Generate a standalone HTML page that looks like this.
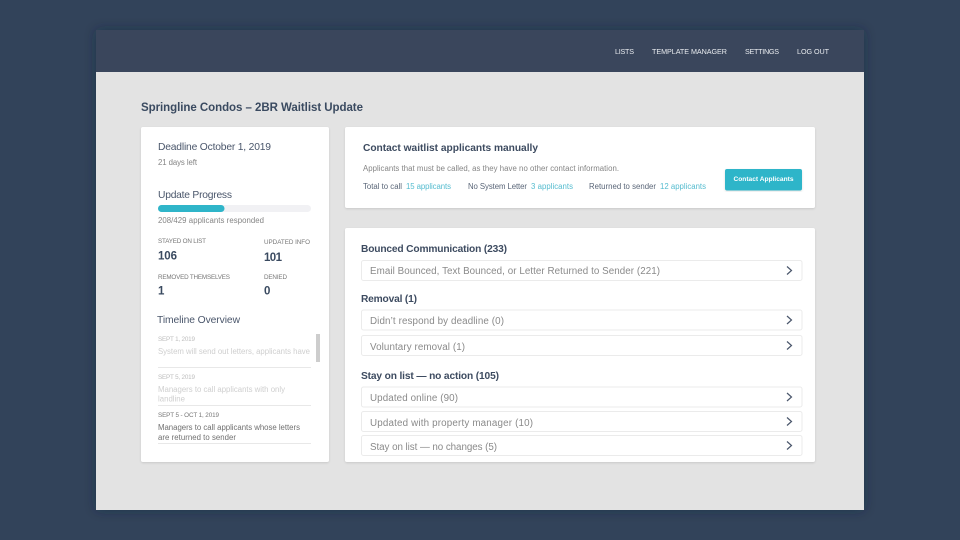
<!DOCTYPE html>
<html>
<head>
<meta charset="utf-8">
<style>
html,body{margin:0;padding:0;width:960px;height:540px;overflow:hidden;background:#32435a}
svg{display:block;filter:blur(.3px)}
text{font-family:"Liberation Sans",sans-serif;white-space:pre}
.nav{font-size:7.2px;fill:#e8ebef}
.h{font-size:10.3px;fill:#4a566b}
.s{font-size:7.8px;fill:#858585}
.l{font-size:6.3px;fill:#777}
.n{font-size:11.5px;font-weight:bold;fill:#3a4a60}
.d{font-size:6.3px;fill:#bdbdbd}
.t{font-size:7.8px;fill:#cfcfcf}
.b{font-size:10.2px;font-weight:bold;fill:#3d4b60}
.m{font-size:7.8px;fill:#5a6678}
.c{font-size:7.8px;fill:#55bccf}
.r{font-size:9.8px;fill:#8a8a8a}
.row{fill:#fff;stroke:#ebebeb;stroke-width:1}
.chev{fill:none;stroke:#4a566b;stroke-width:1.2}
.line{stroke:#e8e8e8;stroke-width:1}
</style>
</head>
<body>
<svg width="960" height="540" viewBox="0 0 960 540" xmlns="http://www.w3.org/2000/svg">
<defs>
<filter id="w" x="-10%" y="-10%" width="120%" height="120%"><feDropShadow dx="0" dy="0" stdDeviation="6" flood-color="#1c2838" flood-opacity=".45"/></filter>
<filter id="k" x="-5%" y="-5%" width="110%" height="110%"><feDropShadow dx="0" dy="1" stdDeviation="1" flood-color="#000" flood-opacity=".12"/></filter>
</defs>
<rect width="960" height="540" fill="#32435a"/>
<rect x="96" y="30" width="768" height="480" fill="#e3e3e3" filter="url(#w)"/>
<rect x="96" y="30" width="768" height="42" fill="#3a465c"/>
<text class="nav" x="615" y="54" textLength="19">LISTS</text>
<text class="nav" x="652" y="54" textLength="75">TEMPLATE MANAGER</text>
<text class="nav" x="745" y="54" textLength="34">SETTINGS</text>
<text class="nav" x="797" y="54" textLength="32">LOG OUT</text>

<text x="141" y="111" font-size="11.500" font-weight="bold" fill="#3a4a60" textLength="222">Springline Condos – 2BR Waitlist Update</text>

<rect x="141" y="127" width="188" height="335" rx="2" fill="#fff" filter="url(#k)"/>
<text class="h" x="158" y="150" textLength="113">Deadline October 1, 2019</text>
<text class="s" x="158" y="165" textLength="39">21 days left</text>
<text class="h" x="158" y="198" textLength="74">Update Progress</text>
<rect x="158" y="205" width="153" height="7" rx="3.5" fill="#f1f1f4"/>
<rect x="158" y="205" width="66.5" height="7" rx="3.5" fill="#2fb5c9"/>
<text class="s" x="158" y="223" textLength="106">208/429 applicants responded</text>
<text class="l" x="158" y="243" textLength="48">STAYED ON LIST</text>
<text class="n" x="158" y="259.500" textLength="19">106</text>
<text class="l" x="264" y="244" textLength="46">UPDATED INFO</text>
<text class="n" x="264" y="261" textLength="18">101</text>
<text class="l" x="158" y="279" textLength="72">REMOVED THEMSELVES</text>
<text class="l" x="264" y="279" textLength="23">DENIED</text>
<text class="n" x="158" y="294.500">1</text>
<text class="n" x="264" y="294.500">0</text>
<text class="h" x="157" y="323" textLength="83">Timeline Overview</text>
<text class="d" x="158" y="341" textLength="37">SEPT 1, 2019</text>
<text class="t" x="158" y="354" textLength="152">System will send out letters, applicants have</text>
<line class="line" x1="158" y1="367.500" x2="311" y2="367.500"/>
<rect x="316" y="334" width="4" height="28" fill="#cdcdcd"/>
<text class="d" x="158" y="379" textLength="37">SEPT 5, 2019</text>
<text class="t" x="158" y="392" textLength="127">Managers to call applicants with only</text>
<text class="t" x="158" y="401.500" textLength="27">landline</text>
<line class="line" x1="158" y1="405.500" x2="311" y2="405.500"/>
<text x="158" y="417" font-size="6.300" fill="#777" textLength="61">SEPT 5 - OCT 1, 2019</text>
<text x="158" y="430" font-size="7.800" fill="#707070" textLength="142">Managers to call applicants whose letters</text>
<text x="158" y="440" font-size="7.800" fill="#707070" textLength="78">are returned to sender</text>
<line class="line" x1="158" y1="443.500" x2="311" y2="443.500"/>

<rect x="345" y="127" width="470" height="81" rx="2" fill="#fff" filter="url(#k)"/>
<text class="b" x="363" y="151" textLength="175">Contact waitlist applicants manually</text>
<text class="s" x="363" y="171" textLength="256">Applicants that must be called, as they have no other contact information.</text>
<text class="m" x="363" y="189" textLength="39">Total to call</text>
<text class="c" x="406" y="189" textLength="45">15 applicants</text>
<text class="m" x="468" y="189" textLength="59">No System Letter</text>
<text class="c" x="531" y="189" textLength="42">3 applicants</text>
<text class="m" x="589" y="189" textLength="67">Returned to sender</text>
<text class="c" x="660" y="189" textLength="46">12 applicants</text>
<rect x="725" y="169" width="77" height="21.500" rx="2" fill="#2fb5c9" filter="url(#k)"/>
<text x="733.500" y="181" font-size="6.600" font-weight="bold" fill="#fff" textLength="60">Contact Applicants</text>

<rect x="345" y="228" width="470" height="234" rx="2" fill="#fff" filter="url(#k)"/>
<text class="b" x="361" y="252" textLength="146">Bounced Communication (233)</text>
<rect class="row" x="361.500" y="260.500" width="440.500" height="20" rx="2"/>
<text class="r" x="370" y="274" textLength="290">Email Bounced, Text Bounced, or Letter Returned to Sender (221)</text>
<path class="chev" d="M787 266.500L791.500 270.500L787 274.500"/>

<text class="b" x="361" y="302" textLength="56">Removal (1)</text>
<rect class="row" x="361.500" y="310" width="440.500" height="20" rx="2"/>
<text class="r" x="370" y="324" textLength="134">Didn’t respond by deadline (0)</text>
<path class="chev" d="M787 316L791.500 320L787 324"/>
<rect class="row" x="361.500" y="335.500" width="440.500" height="20" rx="2"/>
<text class="r" x="370" y="350" textLength="95">Voluntary removal (1)</text>
<path class="chev" d="M787 341.500L791.500 345.500L787 349.500"/>

<text class="b" x="361" y="379" textLength="138">Stay on list — no action (105)</text>
<rect class="row" x="361.500" y="387" width="440.500" height="20" rx="2"/>
<text class="r" x="370" y="401" textLength="88">Updated online (90)</text>
<path class="chev" d="M787 393L791.500 397L787 401"/>
<rect class="row" x="361.500" y="411.500" width="440.500" height="20" rx="2"/>
<text class="r" x="370" y="426" textLength="163">Updated with property manager (10)</text>
<path class="chev" d="M787 417.500L791.500 421.500L787 425.500"/>
<rect class="row" x="361.500" y="435.500" width="440.500" height="20" rx="2"/>
<text class="r" x="370" y="450" textLength="127">Stay on list — no changes (5)</text>
<path class="chev" d="M787 441.500L791.500 445.500L787 449.500"/>
</svg>
</body>
</html>
